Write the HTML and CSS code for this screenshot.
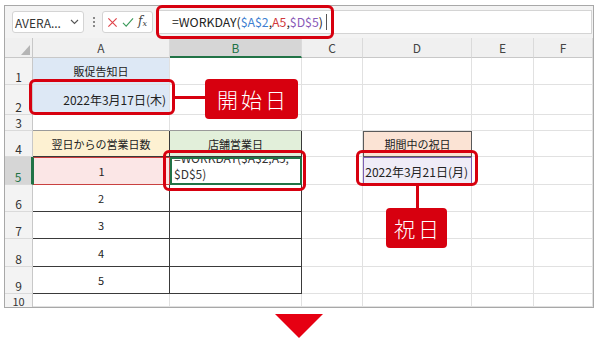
FILE: index.html
```html
<!DOCTYPE html>
<html lang="ja">
<head>
    <meta charset="UTF-8">
    <title>WORKDAY</title>
    <link rel="stylesheet" href="styles.css">
</head>
<body>
    <div class="frame">
        <div class="toolbar">
            <div class="name-box">
                <span>AVERA...</span>
                <svg width="9" height="6" viewBox="0 0 9 6"><polyline points="1,1 4.5,4.5 8,1" fill="none" stroke="#555" stroke-width="1.1"/></svg>
            </div>
            <svg class="dots" width="4" height="12" viewBox="0 0 4 12"><circle cx="2" cy="2" r="1"/><circle cx="2" cy="6" r="1"/><circle cx="2" cy="10" r="1"/></svg>
            <div class="fx-box">
                <svg width="11" height="11" viewBox="0 0 12 12"><path d="M1.5 1.5 L10.5 10.5 M10.5 1.5 L1.5 10.5" stroke="#e0454b" stroke-width="1.3" fill="none"/></svg>
                <svg width="12" height="11" viewBox="0 0 13 12"><polyline points="1,6.5 4.5,10 12,1.5" stroke="#3a9a5a" stroke-width="1.2" fill="none"/></svg>
                <span class="fx">f<sub>x</sub></span>
            </div>
            <div class="formula">
                <span class="expr">=WORKDAY(<span class="ref-a">$A$2</span>,<span class="ref-b">A5</span>,<span class="ref-d">$D$5</span>)</span><span class="caret"></span>
            </div>
        </div>

        <div class="sheet">
            <div class="corner"><span></span></div>
            <div class="col">A</div>
            <div class="col sel">B</div>
            <div class="col">C</div>
            <div class="col">D</div>
            <div class="col">E</div>
            <div class="col">F</div>

            <div class="row">1</div>
            <div class="c blue center">販促告知日</div>
            <div class="c"></div><div class="c"></div><div class="c"></div><div class="c"></div><div class="c"></div>

            <div class="row">2</div>
            <div class="c blue right date">2022年3月17日(木)</div>
            <div class="c"></div><div class="c"></div><div class="c"></div><div class="c"></div><div class="c"></div>

            <div class="row">3</div>
            <div class="c top-edge"></div><div class="c top-edge"></div>
            <div class="c"></div><div class="c"></div><div class="c"></div><div class="c"></div>

            <div class="row">4</div>
            <div class="c tb yellow center">翌日からの営業日数</div>
            <div class="c tb green center">店舗営業日</div>
            <div class="c"></div>
            <div class="c peach center">期間中の祝日</div>
            <div class="c"></div><div class="c"></div>

            <div class="row sel">5</div>
            <div class="c tb pink center">1</div>
            <div class="c tb active"><span class="wrap">=WORKDAY($A$2,A5,<br>$D$5)</span></div>
            <div class="c"></div>
            <div class="c lavender right date">2022年3月21日(月)</div>
            <div class="c"></div><div class="c"></div>

            <div class="row">6</div>
            <div class="c tb center">2</div><div class="c tb"></div>
            <div class="c"></div><div class="c"></div><div class="c"></div><div class="c"></div>

            <div class="row">7</div>
            <div class="c tb center">3</div><div class="c tb"></div>
            <div class="c"></div><div class="c"></div><div class="c"></div><div class="c"></div>

            <div class="row">8</div>
            <div class="c tb center">4</div><div class="c tb"></div>
            <div class="c"></div><div class="c"></div><div class="c"></div><div class="c"></div>

            <div class="row">9</div>
            <div class="c tb center">5</div><div class="c tb"></div>
            <div class="c"></div><div class="c"></div><div class="c"></div><div class="c"></div>

            <div class="row short">10</div>
            <div class="c"></div><div class="c"></div><div class="c"></div>
            <div class="c"></div><div class="c"></div><div class="c"></div>
        </div>
    </div>

    <!-- callouts over the sheet -->
    <div class="mark mark-formula"></div>
    <div class="mark mark-start"></div>
    <div class="link link-start"></div>
    <div class="label label-start">開始日</div>
    <div class="mark mark-result"></div>
    <div class="mark mark-holiday"></div>
    <div class="link link-holiday"></div>
    <div class="label label-holiday">祝日</div>
    <div class="arrow"></div>
</body>
</html>
```

FILE: styles.css
```css
body {
    margin: 0;
    background-color: #fff;
    font-family: 'Noto Sans CJK JP', 'Noto Sans', sans-serif;
    color: #222;
}
.frame {
    margin: 5px 0 0 4px;
    width: 588px;
    border: 1px solid #a8a8a8;
    background-color: #fff;
}
.toolbar {
    display: flex;
    align-items: center;
    height: 32px;
    padding: 0 1px 0 7px;
    background-color: #f3f3f3;
    box-sizing: border-box;
}
.name-box {
    display: flex;
    align-items: center;
    justify-content: space-between;
    width: 72px;
    height: 22px;
    padding: 0 4px 0 2px;
    box-sizing: border-box;
    background-color: #fff;
    border: 1px solid #d4d4d4;
    border-radius: 3px;
    font-size: 12px;
    color: #333;
}
.dots {
    margin: 0 6px 0 8px;
    fill: #666;
}
.fx-box {
    display: flex;
    align-items: center;
    gap: 4px;
    width: 51px;
    height: 22px;
    padding-left: 4px;
    box-sizing: border-box;
    background-color: #fff;
    border: 1px solid #d4d4d4;
    border-radius: 3px;
}
.fx {
    font-family: 'DejaVu Serif', 'Liberation Serif', serif;
    font-style: italic;
    font-size: 12px;
    line-height: 12px;
    color: #444;
}
.fx sub {
    font-size: 8px;
    vertical-align: -1px;
}
.formula {
    flex: 1;
    display: flex;
    align-items: center;
    height: 22px;
    margin-left: 5px;
    padding-left: 13px;
    background-color: #fff;
    border: 1px solid #d4d4d4;
    font-size: 12.3px;
    color: #222;
}
.ref-a { color: #3f7fd1; }
.ref-b { color: #d0393c; }
.ref-d { color: #8a5bb8; }
.caret {
    display: inline-block;
    width: 1px;
    height: 16px;
    margin-left: 3px;
    background-color: #555;
}
.sheet {
    display: grid;
    grid-template-columns: 28px 137px 132px 61px 109px 62px 59px;
    grid-template-rows: 20px 27px 30px 16px 26px 28px 27px 27px 28px 27px 13px;
    font-size: 11px;
}
.sheet > div {
    box-sizing: border-box;
    display: flex;
    align-items: center;
    overflow: hidden;
    white-space: nowrap;
}
.corner {
    position: relative;
    background-color: #f0f0f0;
    border-right: 1px solid #c8c8c8;
    border-bottom: 1px solid #c8c8c8;
}
.corner span {
    position: absolute;
    right: 2px;
    bottom: 2px;
    width: 9px;
    height: 10px;
    background-color: #b5b5b5;
    clip-path: polygon(100% 0, 100% 100%, 0 100%);
}
.col {
    justify-content: center;
    background-color: #f0f0f0;
    border-right: 1px solid #dadada;
    border-bottom: 1px solid #c8c8c8;
    font-size: 12px;
    color: #444;
}
.col.sel {
    background-color: #d6d6d6;
    border-bottom: 2px solid #217346;
    color: #217346;
}
.sheet > .row {
    justify-content: center;
    align-items: flex-end;
    background-color: #f3f3f3;
    border-right: 1px solid #c8c8c8;
    border-bottom: 1px solid #dadada;
    font-size: 12px;
    color: #333;
    line-height: 14px;
}
.sheet > .row.short {
    align-items: center;
    line-height: 12px;
    font-size: 11px;
    border-bottom: none;
}
.row.sel {
    background-color: #d6d6d6;
    border-right: 2px solid #217346;
    color: #217346;
}
.c {
    border-right: 1px solid #e1e1e1;
    border-bottom: 1px solid #e1e1e1;
    padding: 0 3px;
}
.center { justify-content: center; }
.right { justify-content: flex-end; }
.date { font-size: 12px; }
.blue { background-color: #dde8f5; }
.yellow { background-color: #fdf1d2; }
.green { background-color: #e2efda; }
.peach {
    background-color: #fbe3d4;
    border: 1px solid #5a5a5a !important;
}
.top-edge { border-bottom-color: #9a9a9a; }
.tb {
    border-right-color: #3a3a3a;
    border-bottom-color: #3a3a3a;
}
.pink {
    background-color: #fbe6e6;
    border: 1px solid #c9403f !important;
    border-left-color: #217346 !important;
}
.sheet > .active {
    align-items: flex-end;
    border: 2px solid #217346;
    padding: 0 0 1px 2px;
}
.active .wrap {
    font-size: 12px;
    line-height: 16px;
    color: #333;
}
.lavender {
    background-color: #efecf7;
    border: 1px solid #7d5fb3 !important;
}

.mark {
    position: absolute;
    box-sizing: border-box;
    border: 3px solid #d7000f;
    border-radius: 6px;
}
.mark-formula { left: 156px; top: 5px; width: 178px; height: 34px; }
.mark-start { left: 29px; top: 79px; width: 146px; height: 36px; }
.mark-result { left: 163px; top: 150px; width: 143px; height: 41px; }
.mark-holiday { left: 356px; top: 150px; width: 122px; height: 36px; }
.link {
    position: absolute;
    background-color: #d7000f;
}
.link-start { left: 174px; top: 96px; width: 32px; height: 3px; }
.link-holiday { left: 416px; top: 185px; width: 3px; height: 24px; }
.label {
    position: absolute;
    display: flex;
    align-items: center;
    justify-content: center;
    background-color: #d7000f;
    border-radius: 4px;
    color: #fff;
    font-size: 21px;
    font-weight: 300;
    letter-spacing: 3px;
    text-indent: 3px;
}
.label-start { left: 205px; top: 79px; width: 93px; height: 40px; }
.label-holiday { left: 386px; top: 208px; width: 61px; height: 40px; }
.arrow {
    position: absolute;
    left: 275px;
    top: 314px;
    width: 48px;
    height: 24px;
    background-color: #e60012;
    clip-path: polygon(0 0, 100% 0, 50% 100%);
}
```
